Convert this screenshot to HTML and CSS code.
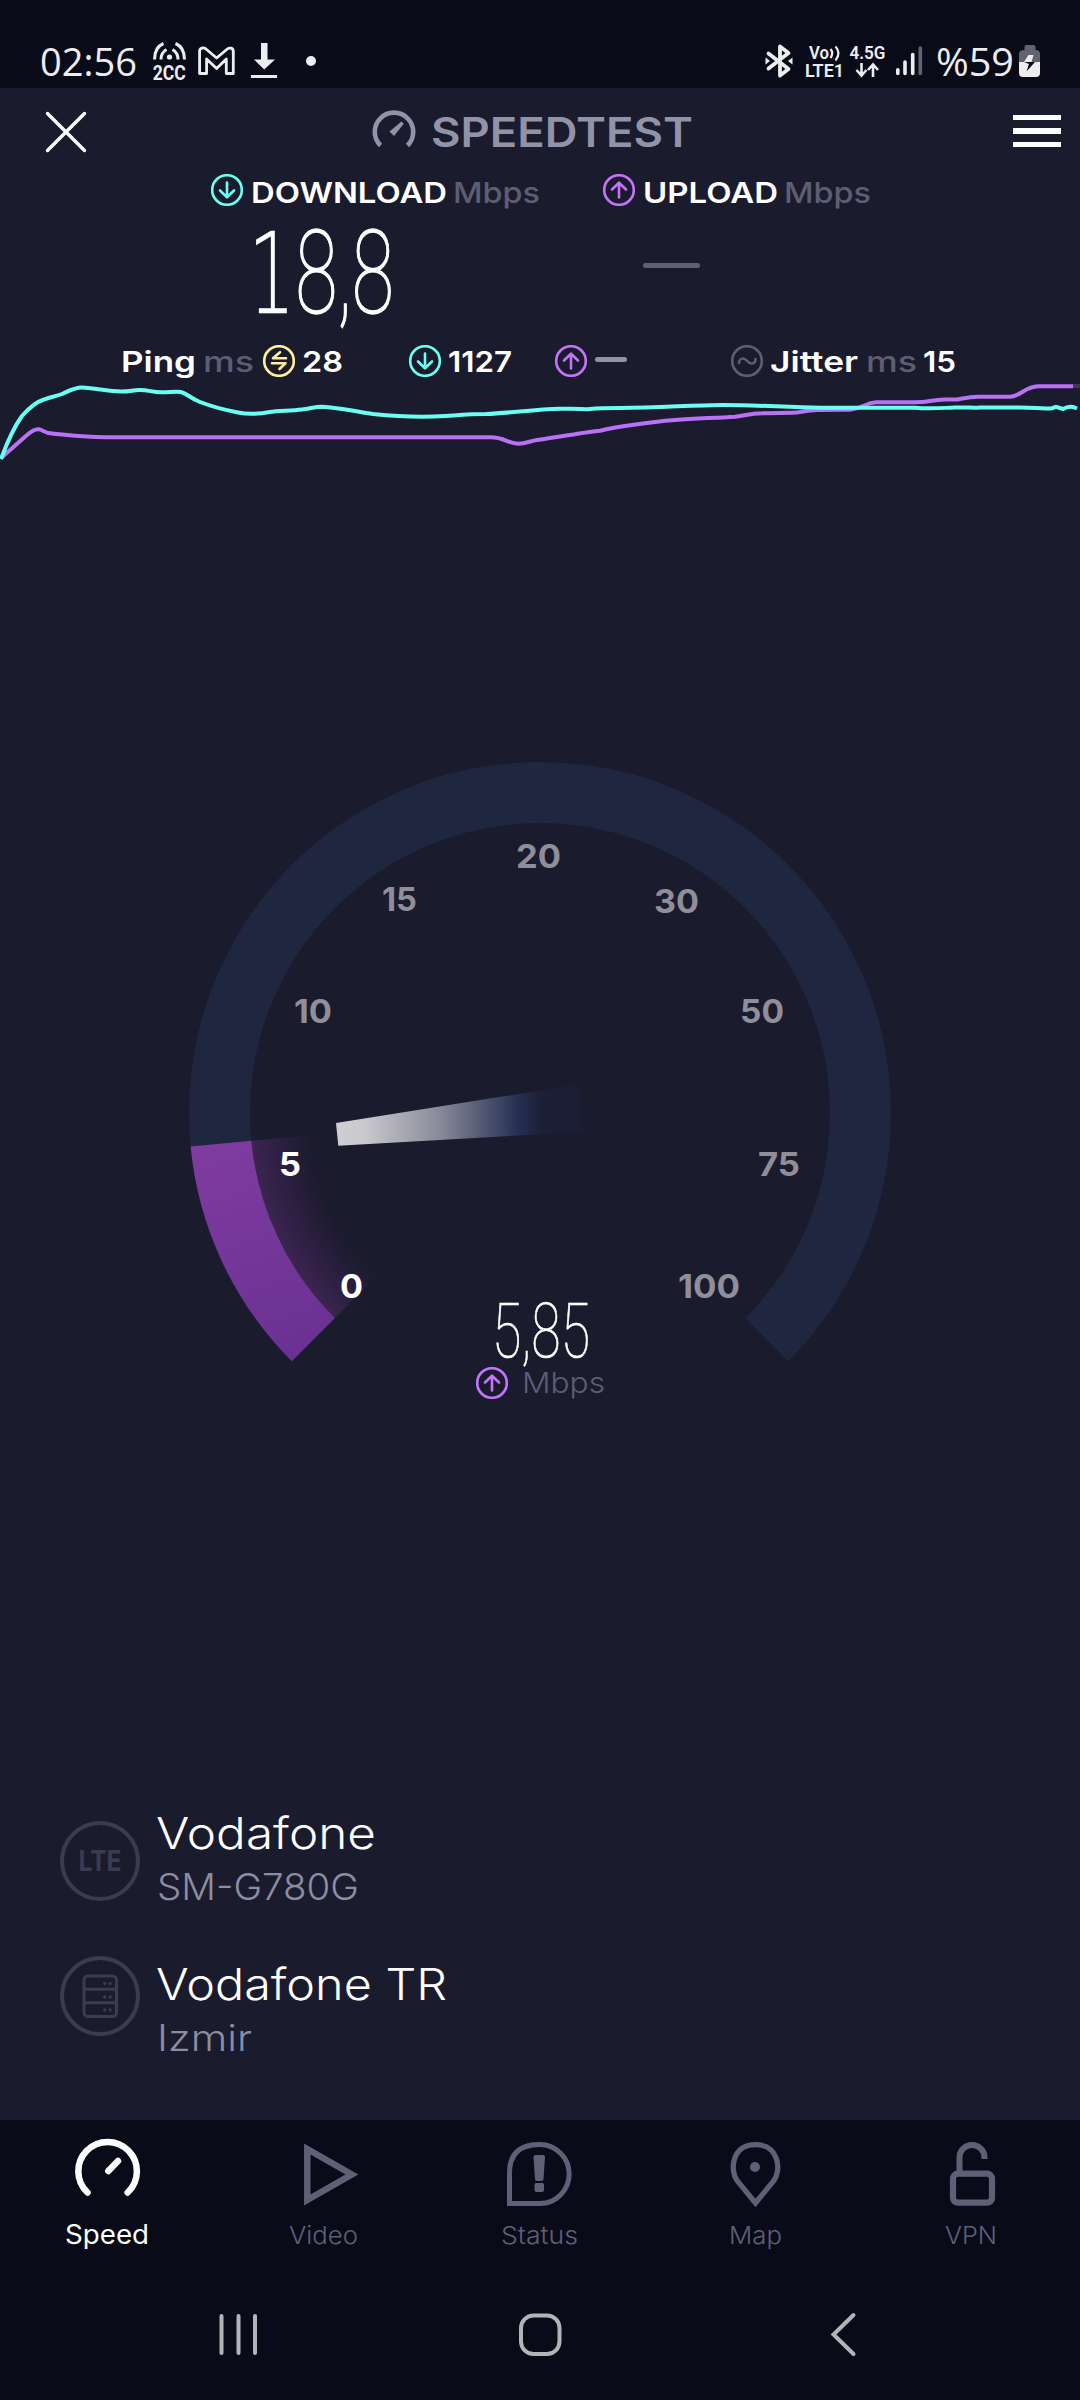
FILE: index.html
```html
<!DOCTYPE html>
<html lang="en">
<head>
<meta charset="utf-8">
<title>Speedtest</title>
<link rel="stylesheet" href="styles.css">
</head>
<body>
<svg class="defs" width="0" height="0">
  <symbol id="down" viewBox="0 0 32 32"><circle cx="16" cy="16" r="14.8"/><path d="M16 8.5V23M9 16.5l7 6.8 7-6.8"/></symbol>
  <symbol id="up" viewBox="0 0 32 32"><circle cx="16" cy="16" r="14.8"/><path d="M16 23.5V9M9 15.5l7-6.8 7 6.8"/></symbol>
  <symbol id="ping" viewBox="0 0 32 32"><circle cx="16" cy="16" r="14.8"/><path d="M23 13.2H10l7-6M9 18.2h13.5l-6 5.8"/></symbol>
  <symbol id="jitter" viewBox="0 0 32 32"><circle cx="16" cy="16" r="14.8"/><path d="M8 18c0-3 2-4.500 4-4.500 4 0 4.500 5 8.500 5 2.500 0 4-1.500 4-4.500"/></symbol>
</svg>

<header class="status">
  <div class="status-left">
    <svg class="clock" width="97" height="40"><text x="0" y="31.500" textLength="97" lengthAdjust="spacingAndGlyphs">02:56</text></svg>
    <svg class="cc" width="34" height="40" viewBox="152 41 34 40">
      <g fill="none" stroke="#ededf0" stroke-width="3"><path d="M154.500 59.500c0-8 3-13.500 9-16M161 59.500c0-5 2-8 5.500-10M184.500 59.500c0-8-3-13.500-9-16M178 59.500c0-5-2-8-5.500-10"/></g>
      <circle cx="169.500" cy="57" r="2.600" fill="#ededf0"/>
      <text x="152.800" y="79.800" textLength="33" lengthAdjust="spacingAndGlyphs">2CC</text>
    </svg>
    <svg class="mail" width="38" height="30" viewBox="198 46 38 30"><path fill="none" stroke="#ededf0" stroke-width="2.800" stroke-linejoin="round" d="M199.600 51.500v22h7V59l10 9.500 9.700-9.500v14.500h7v-22c0-4-4-4-6-2.500L216.600 58 206 49c-3-2-6.400-1-6.400 2.500z"/></svg>
    <svg class="dl" width="26" height="36" viewBox="251 44 26 36"><path fill="#ededf0" d="M261 44h6.500v16.500h7.500L264.200 70.500 254 60.500h7zM251 76h26v3h-26z"/></svg>
    <svg class="dot" width="10" height="10"><circle cx="5" cy="5" r="5" fill="#ededf0"/></svg>
  </div>
  <div class="status-right">
    <svg width="28" height="34" viewBox="764 44 28 34"><g fill="none" stroke="#ededf0" stroke-width="3.800" stroke-linejoin="round" stroke-linecap="round"><path d="M767.500 53.500l20 15.500-8.500 6.500v-29l8.500 6.500-20 15.500"/></g><path fill="#ededf0" d="M764.500 57.500l4.500 3.500-4.500 3.500zM791.500 57.500L787 61l4.500 3.500z"/></svg>
    <svg class="volte" width="38" height="34" viewBox="805 44 38 34">
      <text x="808" y="59.300" textLength="20" lengthAdjust="spacingAndGlyphs">Vo</text>
      <path fill="none" stroke="#ededf0" stroke-width="2.200" d="M829.500 49q3.500 4 0 9M834.500 46.500q6 6.500 0 14"/>
      <text x="804" y="77" textLength="39" lengthAdjust="spacingAndGlyphs">LTE1</text>
    </svg>
    <svg class="volte g45" width="36" height="34" viewBox="849 44 36 34">
      <text x="848.500" y="59.300" textLength="36" lengthAdjust="spacingAndGlyphs">4.5G</text>
      <path fill="none" stroke="#ededf0" stroke-width="2.600" d="M860.500 63v12.500M855.500 70l5 5.500 5-5.500M872 77V64.500M867 70l5-5.500 5 5.500"/>
    </svg>
    <svg class="signal" width="28" height="32" viewBox="894 45 28 32"><g stroke="#ededf0" stroke-width="3.600" stroke-linecap="round"><path d="M896.800 69.800V73.500M904 62v11.500M911.700 54.500v19"/><path stroke="#62636f" d="M919.300 48v25.500"/></g></svg>
    <svg class="clock pct" width="78" height="40"><text x="0" y="31.500" textLength="78" lengthAdjust="spacingAndGlyphs">%59</text></svg>
    <svg class="batt" width="22" height="34" viewBox="1019 44 22 34"><path fill="#62636f" d="M1024.500 50v-3q0-2 2-2h7q2 0 2 2v3q4.500 0 4.500 4v8h-21v-8q0-4 5.500-4z"/><path fill="#ededf0" d="M1019 62h21v11q0 4-4 4h-13q-4 0-4-4z"/><path fill="#ededf0" d="M1028.500 55h5l-2 7h-7.500z"/><path fill="#090b19" d="M1024 62h11l-8.500 9.500 2.500-7.500z"/></svg>
  </div>
</header>

<main class="app">
  <div class="toolbar">
    <svg class="close" width="42" height="42"><path d="M2.500 2.500l37 37M39.500 2.500l-37 37"/></svg>
    <div class="brand">
      <svg width="44" height="40" viewBox="0 0 44 40"><path fill="none" stroke="#9193a8" stroke-width="4.600" d="M8.500 35.500A19.200 19.200 0 1 1 35.500 35.500"/><path fill="#9193a8" d="M29.500 11.500l2.300 2.300-9.800 12.200-4.500-4.500z"/></svg>
      <svg class="word" width="260" height="40"><text x="-1" y="34" textLength="262" lengthAdjust="spacingAndGlyphs">SPEEDTEST</text></svg>
    </div>
    <div class="menu"><i></i><i></i><i></i></div>
  </div>

  <section class="results">
    <div class="result">
      <div class="result-head">
        <svg class="ico cyan"><use href="#down"/></svg>
        <svg class="name" width="196" height="32"><text x="-1" y="29" textLength="196" lengthAdjust="spacingAndGlyphs">DOWNLOAD</text></svg>
        <svg class="unit" width="86" height="32"><text x="-2" y="29" textLength="87" lengthAdjust="spacingAndGlyphs">Mbps</text></svg>
      </div>
      <svg class="big" width="144" height="96"><text x="-4" y="85" textLength="146" lengthAdjust="spacingAndGlyphs"><tspan class="one">1</tspan>8,8</text></svg>
    </div>
    <div class="result upload">
      <div class="result-head">
        <svg class="ico purple"><use href="#up"/></svg>
        <svg class="name" width="135" height="32"><text x="-1" y="29" textLength="135" lengthAdjust="spacingAndGlyphs">UPLOAD</text></svg>
        <svg class="unit" width="86" height="32"><text x="-2" y="29" textLength="87" lengthAdjust="spacingAndGlyphs">Mbps</text></svg>
      </div>
      <i class="dash"></i>
    </div>
  </section>

  <section class="latency">
    <svg class="name" width="74" height="32"><text x="-1" y="27" textLength="75" lengthAdjust="spacingAndGlyphs">Ping</text></svg>
    <svg class="unit ms" width="50" height="32"><text x="-1" y="27" textLength="51" lengthAdjust="spacingAndGlyphs">ms</text></svg>
    <svg class="ico yellow"><use href="#ping"/></svg>
    <svg class="name val" width="40" height="32"><text x="-1" y="27" textLength="41" lengthAdjust="spacingAndGlyphs">28</text></svg>
    <svg class="ico cyan dn"><use href="#down"/></svg>
    <svg class="name val" width="62" height="32"><text x="-1" y="27" textLength="64" lengthAdjust="spacingAndGlyphs">1127</text></svg>
    <svg class="ico purple upl"><use href="#up"/></svg>
    <i class="dash small"></i>
    <svg class="ico gray jit"><use href="#jitter"/></svg>
    <svg class="name val" width="88" height="32"><text x="-1" y="27" textLength="88" lengthAdjust="spacingAndGlyphs">Jitter</text></svg>
    <svg class="unit ms" width="50" height="32"><text x="-1" y="27" textLength="51" lengthAdjust="spacingAndGlyphs">ms</text></svg>
    <svg class="name last" width="32" height="32"><text x="-1" y="27" textLength="33" lengthAdjust="spacingAndGlyphs">15</text></svg>
  </section>

  <svg class="chart" width="1080" height="84" viewBox="0 378 1080 84">
    <path stroke="#3c3c50" stroke-width="2" d="M1073 386h7"/>
    <path stroke="#b872f5" d="M1 458L27 435Q35 428 40 429.500C44 431 46 433 52 433.500 68 435 85 437.300 105 437.300H490C504 437 508 443.700 518 443.700 526 443.500 530 441 537 440C560 437 585 432 600 430.700C615 427 650 422 675 420C695 418.500 715 418 735 416.700C748 415 750 413.300 762 413.300C780 412.500 790 413.500 800 412C812 409.500 820 409.700 850 409.700C862 409 864 403 876 402.300H915C930 402 930 400 945 399.500H957C965 398 970 396.700 978 396.700H1010C1020 397 1025 386.500 1038 386.300H1073"/>
    <path stroke="#6afff3" d="M1 459C8 440 14 427 22 416C29 408 36 402 44 399.500C50 397 56 396.500 62 394C69 391 74 387.500 82 387.500S110 391.500 121 391.500 131 390 140 390 152 392.300 161 392.300C170 392.300 175 391 181 392C188 394 190 398 200 402C213 407 225 410 238 412.500S262 413.500 270 412S290 411 302 409.500 314 406.700 322 406.700C340 407.500 358 412 373 414C400 416.800 430 417 445 416S470 414 486 414C510 413 535 409.500 560 408.800S580 410 590 409 605 408 620 408C660 408 690 405 722 404.900S790 407.500 820 407.700H915C930 409 940 408 955 407.500S970 408.200 980 407.500H1020C1035 407.500 1042 409 1052 408.200L1056 406.800 1063 409Q1068 406 1073 407L1077 408.500"/>
  </svg>

  <svg class="gauge" width="720" height="680" viewBox="180 750 720 680">
    <defs>
      <linearGradient id="fill" gradientUnits="userSpaceOnUse" x1="210" y1="1140" x2="290" y2="1361"><stop offset="0" stop-color="#803c9f"/><stop offset="1" stop-color="#693193"/></linearGradient>
      <radialGradient id="glow" gradientUnits="userSpaceOnUse" cx="540" cy="1113" r="290"><stop offset=".8" stop-color="#3a2350" stop-opacity="0"/><stop offset="1" stop-color="#3c2450"/></radialGradient>
      <linearGradient id="needle" gradientUnits="userSpaceOnUse" x1="336" y1="0" x2="583" y2="0"><stop offset="0" stop-color="#cfced3"/><stop offset=".11" stop-color="#cac9ce"/><stop offset=".42" stop-color="#898a99"/><stop offset=".73" stop-color="#263155"/><stop offset=".83" stop-color="#1b2037"/><stop offset="1" stop-color="#1a1e33"/></linearGradient>
    </defs>
    <path fill="#1e2640" d="M291.800 1361.200A351 351 0 1 1 788.200 1361.200L745.100 1318.100A290 290 0 1 0 334.900 1318.100Z"/>
    <path fill="url(#glow)" d="M334.900 1318.100A290 290 0 0 1 251.300 1140.800L309 1135.300A232 232 0 0 0 376 1277Z"/>
    <path fill="url(#fill)" d="M291.800 1361.200A351 351 0 0 1 190.600 1146.600L251.300 1140.800A290 290 0 0 0 334.900 1318.100Z"/>
    <path fill="url(#needle)" d="M336 1123L578 1084.500 583 1131.700 338.300 1145.700z"/>
    <g class="ticks">
      <text class="on" x="340" y="1298" textLength="23" lengthAdjust="spacingAndGlyphs">0</text>
      <text class="on" x="279" y="1176" textLength="22" lengthAdjust="spacingAndGlyphs">5</text>
      <text x="294" y="1023" textLength="38" lengthAdjust="spacingAndGlyphs">10</text>
      <text x="382" y="911" textLength="35" lengthAdjust="spacingAndGlyphs">15</text>
      <text x="516" y="868" textLength="45" lengthAdjust="spacingAndGlyphs">20</text>
      <text x="654" y="913" textLength="45" lengthAdjust="spacingAndGlyphs">30</text>
      <text x="740" y="1023" textLength="44" lengthAdjust="spacingAndGlyphs">50</text>
      <text x="758" y="1176" textLength="42" lengthAdjust="spacingAndGlyphs">75</text>
      <text x="678" y="1298" textLength="62" lengthAdjust="spacingAndGlyphs">100</text>
    </g>
    <text class="speed" x="492" y="1356.500" textLength="98" lengthAdjust="spacingAndGlyphs">5,85</text>
    <svg class="ico purple" x="476" y="1367" width="32" height="32"><use href="#up"/></svg>
    <text class="speed-unit" x="522" y="1392.500" textLength="83" lengthAdjust="spacingAndGlyphs">Mbps</text>
  </svg>

  <section class="hosts">
    <div class="host">
      <svg width="80" height="80"><circle class="ring" cx="40" cy="40" r="38"/><text x="18.500" y="50" textLength="43" lengthAdjust="spacingAndGlyphs">LTE</text></svg>
      <div class="host-text">
        <svg class="h1" width="220" height="48"><text x="-1" y="40" textLength="220" lengthAdjust="spacingAndGlyphs">Vodafone</text></svg>
        <svg class="h2" width="204" height="48"><text x="0" y="43" textLength="202" lengthAdjust="spacingAndGlyphs">SM-G780G</text></svg>
      </div>
    </div>
    <div class="host second">
      <svg width="80" height="80"><circle class="ring" cx="40" cy="40" r="38"/><g fill="none" stroke="#3c3c50" stroke-width="3"><rect x="24" y="20" width="32.500" height="40.500" rx="4"/><path d="M24 33.200h32.500M24 46.700h32.500"/></g><g fill="#3c3c50"><circle cx="44.700" cy="27.500" r="1.700"/><circle cx="50.200" cy="27.500" r="1.700"/><circle cx="44.700" cy="41" r="1.700"/><circle cx="50.200" cy="41" r="1.700"/><circle cx="44.700" cy="54" r="1.700"/><circle cx="50.200" cy="54" r="1.700"/></g></svg>
      <div class="host-text">
        <svg class="h1" width="292" height="48"><text x="-1" y="40" textLength="291" lengthAdjust="spacingAndGlyphs">Vodafone TR</text></svg>
        <svg class="h2" width="96" height="48"><text x="0" y="43" textLength="95" lengthAdjust="spacingAndGlyphs">Izmir</text></svg>
      </div>
    </div>
  </section>
</main>

<nav class="tabs">
  <a class="tab active">
    <svg width="72" height="72" viewBox="72 2138 72 72"><path stroke-width="6.500" stroke-linecap="round" d="M87.500 2192.500A29.300 29.300 0 1 1 127.700 2192.500M108.300 2171l9.700-10"/></svg>
    <svg class="cap" width="84" height="36"><text x="-1" y="28" textLength="84" lengthAdjust="spacingAndGlyphs">Speed</text></svg>
  </a>
  <a class="tab">
    <svg width="72" height="72" viewBox="288 2138 72 72"><path stroke-width="6.500" d="M307.300 2149v51l44.500-25.500z"/></svg>
    <svg class="cap" width="69" height="36"><text x="-1" y="28" textLength="69" lengthAdjust="spacingAndGlyphs">Video</text></svg>
  </a>
  <a class="tab">
    <svg width="72" height="72" viewBox="504 2138 72 72"><path stroke-width="5" d="M509.500 2203.500V2173Q509.500 2144.500 539.500 2144.500A29.500 29.500 0 0 1 540 2203.500z"/><path class="solid" d="M533.500 2157q0-2 2-2h7.500q2 0 2 2l-1.500 22q0 2-2 2h-4.500q-2 0-2-2zM534.500 2184.500q0-1.500 1.500-1.500h6.500q1.500 0 1.500 1.500v5.500q0 2-2 2h-5.500q-2 0-2-2z"/></svg>
    <svg class="cap" width="77" height="36"><text x="-1" y="28" textLength="77" lengthAdjust="spacingAndGlyphs">Status</text></svg>
  </a>
  <a class="tab">
    <svg width="72" height="72" viewBox="720 2138 72 72"><path stroke-width="5.300" d="M755.500 2203L737 2180.500C729.500 2170 732 2144.700 755.500 2144.700S781.500 2170 774 2180.500z"/><circle class="solid" cx="755" cy="2167" r="5"/></svg>
    <svg class="cap" width="54" height="36"><text x="0" y="28" textLength="53" lengthAdjust="spacingAndGlyphs">Map</text></svg>
  </a>
  <a class="tab">
    <svg width="72" height="72" viewBox="936 2138 72 72"><rect stroke-width="6.200" x="953" y="2173.700" width="39" height="29" rx="5"/><path stroke-width="6" d="M959.500 2172V2157.500a12.500 12.500 0 0 1 25 0v1.500"/></svg>
    <svg class="cap" width="52" height="36"><text x="-1" y="28" textLength="52" lengthAdjust="spacingAndGlyphs">VPN</text></svg>
  </a>
</nav>

<footer class="sysnav">
  <svg width="42" height="44"><path d="M4.500 4v37M21.500 4v37M38 4v37"/></svg>
  <svg class="home" width="44" height="44"><rect x="3" y="3.500" width="38.500" height="38.500" rx="12.500"/></svg>
  <svg class="back" width="26" height="44"><path d="M23.500 3l-20 19.500 20 19.500"/></svg>
</footer>
</body>
</html>
```
FILE: styles.css
```css
* { box-sizing: border-box; }
body {
  margin: 0;
  width: 1080px;
  height: 2400px;
  background: #090b19;
  color: #fff;
  font-family: Inter, "Open Sans", sans-serif;
  display: flex;
  flex-direction: column;
  overflow: hidden;
}
svg { display: block; overflow: visible; flex: none; }
i { display: block; }
.defs { display: none; }

/* status bar */
.status {
  height: 88px;
  padding: 34px 39px 0 40px;
  display: flex;
  justify-content: space-between;
}
.status-left, .status-right { display: flex; align-items: center; height: 54px; }
.clock { font: 400 38px "Open Sans", sans-serif; fill: #ededf0; margin-top: 6px; }
.cc { font: 700 21px Roboto, sans-serif; fill: #ededf0; margin-left: 15px; }
.mail { margin-left: 12px; }
.dl { margin-left: 15px; }
.dot { margin-left: 29px; }
.volte { font: 600 18px Roboto, sans-serif; fill: #ededf0; margin-left: 13px; }
.g45 { margin-left: 6px; }
.signal { margin-left: 9px; }
.pct { margin-left: 13px; }
.batt { margin-left: 5px; }

/* app */
.app { height: 2032px; background: #1b1b2e; display: flex; flex-direction: column; }
.toolbar {
  height: 80px;
  padding: 0 19px 0 45px;
  display: flex;
  align-items: center;
  justify-content: space-between;
  flex: none;
}
.close path { stroke: #fff; stroke-width: 3.4; stroke-linecap: round; }
.close { margin-top: 7px; }
.brand { display: flex; gap: 16px; margin: 10px 36px 0 0; }
.brand svg:first-child { margin-top: -3px; }
.word { font-weight: 600; font-size: 41px; fill: #9193a8; }
.menu { display: flex; flex-direction: column; gap: 8px; margin-top: 6px; }
.menu i { width: 48px; height: 5.3px; background: #fff; }

.results { height: 170px; flex: none; display: flex; padding-left: 211px; gap: 62px; }
.result { padding-top: 6px; }
.result-head { display: flex; }
.name { font-weight: 600; font-size: 29px; fill: #fff; }
.unit { font-weight: 500; font-size: 29px; fill: #5d5e73; margin-left: 7px; }
.result-head .name { margin-left: 9px; }
.big {
  font: 100 116px Roboto, sans-serif;
  fill: #fff;
  stroke: #fff;
  stroke-width: 1.4;
  margin: 22px 0 0 41px;
}
.one { font: 200 112px "DejaVu Sans", sans-serif; stroke-width: .4; }
.ico { width: 32px; height: 32px; fill: none; stroke-width: 2.6; stroke-linecap: round; stroke-linejoin: round; }
.cyan { stroke: #6afff3; }
.purple { stroke: #c573f8; }
.yellow { stroke: #fff09a; }
.gray { stroke: #5d5e73; }
.dash { width: 57px; height: 5px; border-radius: 3px; background: #5f6076; margin: 57px 0 0 40px; }

.latency { height: 40px; padding: 7px 0 0 122px; display: flex; flex: none; }
.latency .ms { margin-left: 8px; }
.latency .yellow { margin-left: 9px; }
.latency .val { margin-left: 8px; }
.latency .dn { margin-left: 66px; }
.latency .upl { margin-left: 44px; }
.latency .small { width: 32px; background: #9193a8; margin: 12px 0 0 8px; }
.latency .jit { margin-left: 104px; }
.latency .last { margin-left: 7px; }

.chart path { fill: none; stroke-width: 4; }
.gauge { margin: 288px 0 0 180px; }
.ticks { font-weight: 700; font-size: 33px; fill: #8f8e99; }
.ticks .on { fill: #fff; }
.speed { font: 100 76px Roboto, sans-serif; fill: #fff; stroke: #fff; stroke-width: .7; }
.speed-unit { font-weight: 300; font-size: 28px; fill: #5d5e73; }

.hosts { padding: 379px 0 0 60px; }
.host { display: flex; gap: 17px; align-items: center; height: 96px; }
.host > svg { fill: #3c3c50; font-weight: 700; font-size: 28px; margin-top: 8px; }
.ring { stroke: #3c3c50; stroke-width: 4; fill: none; }
.second { margin-top: 55px; }
.second > svg { margin-top: -24px; }
.h1 { font-weight: 300; font-size: 43.500px; fill: #fff; }
.h2 { font-weight: 300; font-size: 37px; fill: #8c8da3; }

/* tab bar */
.tabs { height: 160px; display: flex; }
.tab {
  width: 216px;
  padding-top: 18px;
  display: flex;
  flex-direction: column;
  align-items: center;
  gap: 6px;
  fill: none;
  stroke: #5f6076;
}
.active { stroke: #fff; }
.solid { fill: #5f6076; stroke: none; }
.cap { font-weight: 300; font-size: 24.500px; fill: #5f6076; stroke: none; }
.active .cap { font-weight: 400; font-size: 26.500px; fill: #fff; }

/* system navigation */
.sysnav { height: 120px; display: flex; padding: 32px 0 0 217px; }
.sysnav svg { fill: none; stroke: #b3b3b8; stroke-width: 4; stroke-linecap: round; }
.home { margin-left: 259px; }
.back { margin-left: 268px; }
```
